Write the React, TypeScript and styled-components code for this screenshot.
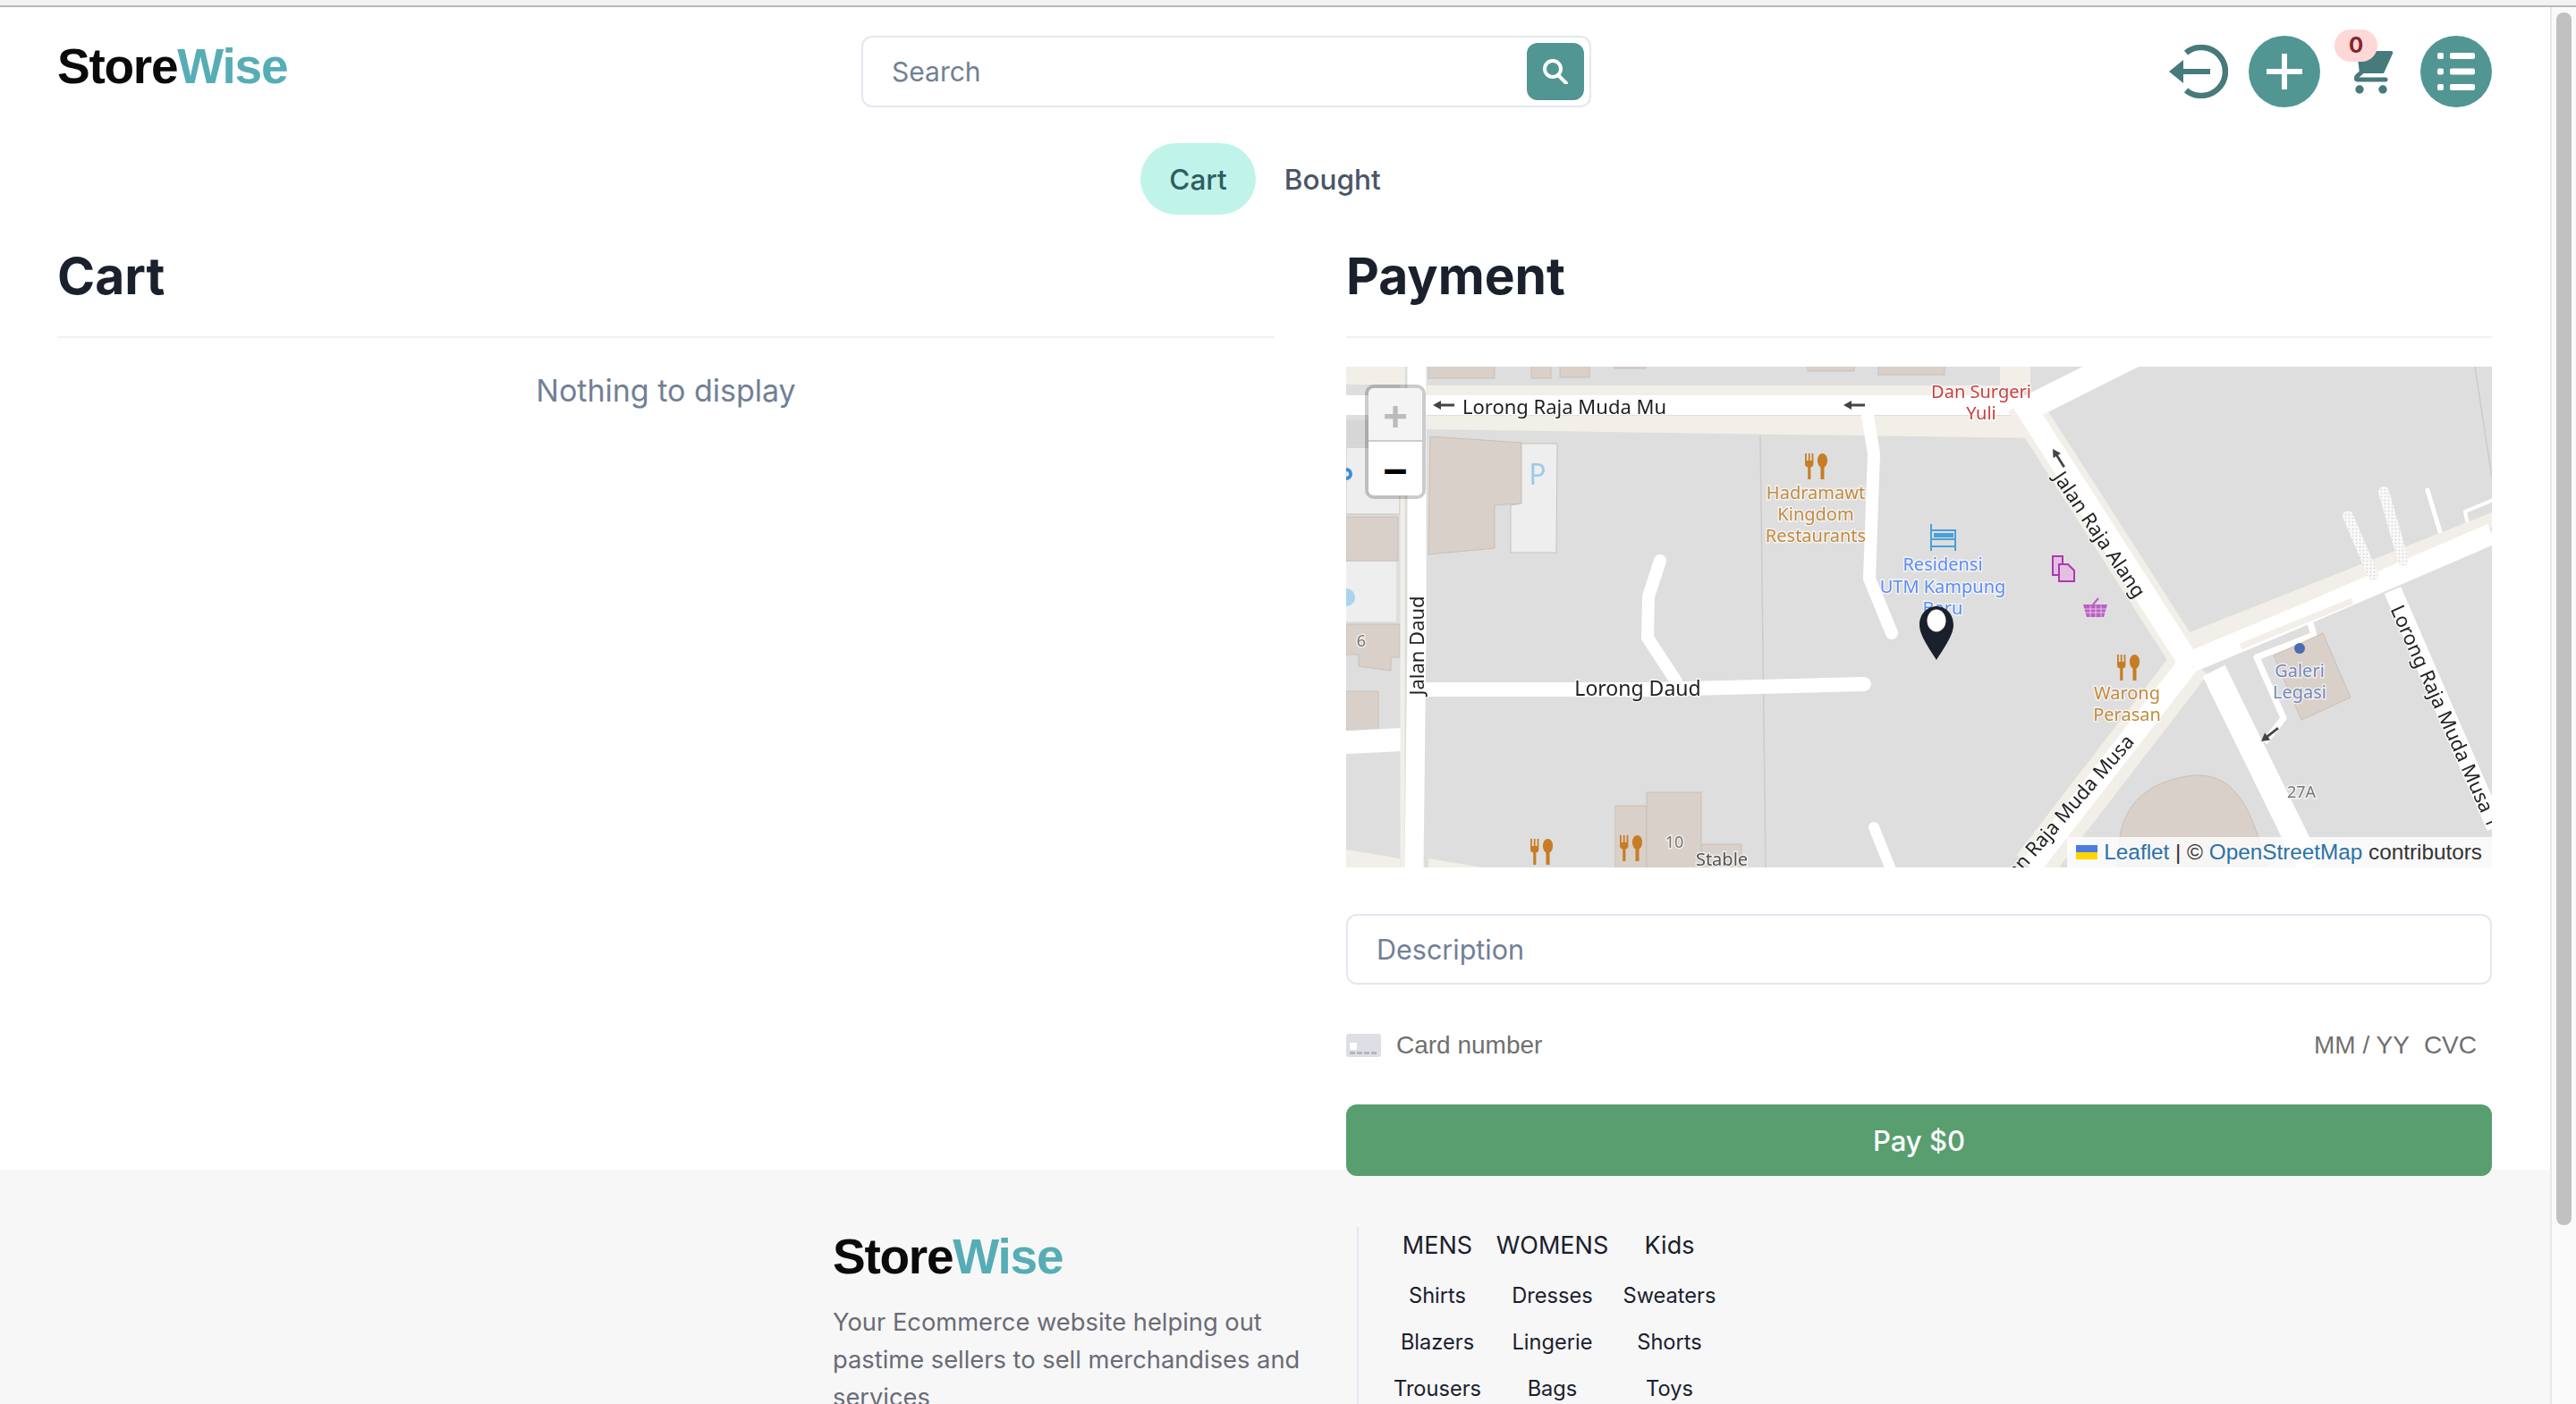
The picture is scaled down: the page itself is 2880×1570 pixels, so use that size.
import React from "react";
import styled, { createGlobalStyle } from "styled-components";

const Global = createGlobalStyle`
  html, body { margin: 0; padding: 0; background: #fff; overflow: hidden; }
  * { box-sizing: border-box; }
  body { font-family: Inter, "Liberation Sans", sans-serif; color: #1a202c; }
`;

const Shell = styled.div`
  width: 2880px;
  height: 1570px;
  overflow: hidden;
  display: flex;
  flex-direction: column;
`;
const BrowserStrip = styled.div`
  flex: 0 0 8px;
  background: #f2f2f2;
  border-bottom: 2px solid #b8b8b8;
`;
const Body = styled.div`
  flex: 1;
  display: flex;
  min-height: 0;
`;
const Page = styled.div`
  flex: 1;
  min-width: 0;
`;
const ScrollTrack = styled.div`
  flex: 0 0 29px;
  background: #fafafa;
  border-left: 2px solid #e8e8e8;
  padding: 6px 5px 0 5px;
`;
const ScrollThumb = styled.div`
  height: 1356px;
  background: #c1c1c1;
  border-radius: 8px;
`;

const Header = styled.header`
  display: grid;
  grid-template-columns: 899px 816px 1fr;
  padding: 32px 65px 0 64px;
`;
const Logo = styled.div`
  font-family: "Liberation Sans", sans-serif;
  font-weight: 700;
  font-size: 55px;
  line-height: 41px;
  letter-spacing: -1.25px;
  color: #0a0a0a;
  margin-top: 14px;
  white-space: nowrap;
  span { color: #56adb5; }
`;
const SearchBox = styled.div`
  height: 80px;
  border: 2px solid #e2e8f0;
  border-radius: 12px;
  display: flex;
  align-items: center;
  justify-content: space-between;
  padding: 0 6px 0 32px;
  font-size: 30px;
  color: #718096;
`;
const SearchButton = styled.div`
  width: 64px;
  height: 64px;
  border-radius: 12px;
  background: #519693;
  display: flex;
  align-items: center;
  justify-content: center;
`;
const IconBar = styled.div`
  display: flex;
  align-items: center;
  justify-content: flex-end;
  height: 80px;
`;
const Slot = styled.div<{ $gap?: number }>`
  display: flex;
  margin-left: ${(p) => p.$gap ?? 0}px;
  position: relative;
`;
const RoundButton = styled.div`
  width: 80px;
  height: 80px;
  border-radius: 50%;
  background: #519693;
  display: flex;
  align-items: center;
  justify-content: center;
`;
const Badge = styled.div`
  position: absolute;
  left: -22px;
  top: -23px;
  width: 48px;
  height: 36px;
  border-radius: 18px;
  background: #fed7d7;
  color: #822727;
  font-size: 24px;
  font-weight: 700;
  line-height: 36px;
  text-align: center;
`;

const Tabs = styled.nav`
  display: flex;
  justify-content: center;
  margin-top: 40px;
`;
const Tab = styled.div<{ $active?: boolean }>`
  height: 80px;
  padding: 0 32px;
  border-radius: 40px;
  display: flex;
  align-items: center;
  font-size: 31.5px;
  font-weight: 500;
  color: ${(p) => (p.$active ? "#2f5d62" : "#4a5568")};
  background: ${(p) => (p.$active ? "#c0f4ea" : "transparent")};
`;

const Columns = styled.main`
  height: 1068px;
  display: grid;
  grid-template-columns: 1361px 1281px;
  column-gap: 80px;
  padding: 33px 65px 0 64px;
`;
const Column = styled.section`
  display: flex;
  flex-direction: column;
  min-width: 0;
`;
const Title = styled.h2`
  margin: 0;
  height: 105px;
  padding-bottom: 31px;
  border-bottom: 2px solid #edf0f4;
  font-size: 57px;
  line-height: 72px;
  font-weight: 700;
  color: #1a202c;
`;
const Empty = styled.div`
  margin-top: 32px;
  line-height: 54px;
  font-size: 34px;
  text-align: center;
  color: #718096;
`;
const MapFrame = styled.div`
  margin-top: 32px;
  height: 560px;
  position: relative;
  overflow: hidden;
  background: #dedede;
`;
const MapArt = styled.svg`
  display: block;
  width: 1281px;
  height: 560px;
  filter: blur(0.6px);
`;
const MapLabel = styled.text<{ $color?: string; $size?: number; $anchor?: string }>`
  font-family: "Noto Sans", sans-serif;
  font-size: ${(p) => p.$size ?? 20}px;
  fill: ${(p) => p.$color ?? "#222"};
  stroke: rgba(255, 255, 255, 0.6);
  stroke-width: 3px;
  paint-order: stroke;
  text-anchor: ${(p) => p.$anchor ?? "middle"};
`;
const ParkingMark = styled.text`
  font-family: "Noto Sans", sans-serif;
  font-size: 32px;
  fill: #9bcbe8;
  text-anchor: middle;
`;
const ZoomControl = styled.div`
  position: absolute;
  left: 21px;
  top: 20px;
  width: 68px;
  border: 4px solid rgba(0, 0, 0, 0.2);
  border-radius: 10px;
  background-clip: padding-box;
  overflow: hidden;
`;
const ZoomButton = styled.div<{ $off?: boolean }>`
  height: 60px;
  padding-top: 4px;
  display: flex;
  align-items: center;
  justify-content: center;
  background: ${(p) => (p.$off ? "#f4f4f4" : "#fff")};
  color: ${(p) => (p.$off ? "#bbb" : "#000")};
  border-bottom: ${(p) => (p.$off ? "2px solid #ccc" : "none")};
  font-family: "DejaVu Sans Mono", monospace;
  font-weight: 700;
  font-size: 44px;
  line-height: 1;
`;
const Attribution = styled.div`
  position: absolute;
  right: 0;
  bottom: 0;
  height: 34px;
  padding: 0 11px 0 10px;
  background: rgba(255, 255, 255, 0.8);
  display: flex;
  align-items: center;
  gap: 7px;
  font-family: "Liberation Sans", sans-serif;
  font-size: 24.3px;
  color: #333;
  white-space: nowrap;
`;
const Flag = styled.svg`
  display: block;
  width: 24px;
  height: 16px;
`;
const MapLink = styled.span`
  color: #2a72a8;
`;
const TextField = styled.div`
  margin-top: 52px;
  height: 79px;
  flex: none;
  border: 2px solid #e2e8f0;
  border-radius: 12px;
  padding: 0 32px;
  display: flex;
  align-items: center;
  font-size: 30.5px;
  color: #718096;
`;
const CardRow = styled.div`
  margin-top: 52px;
  height: 32px;
  flex: none;
  display: flex;
  align-items: center;
  padding-right: 17px;
  font-family: "Liberation Sans", sans-serif;
  font-size: 28px;
  color: #707070;
`;
const CardIcon = styled.svg`
  width: 39px;
  height: 26px;
  margin-right: 17px;
`;
const CardNumber = styled.span`
  flex: 1;
`;
const CardHint = styled.span`
  margin-left: 16px;
`;
const PayButton = styled.button`
  position: relative;
  z-index: 1;
  flex: none;
  margin-top: 50px;
  height: 80px;
  border: 0;
  border-radius: 12px;
  background: #589e6f;
  color: #fff;
  font-family: Inter, sans-serif;
  font-size: 31px;
  font-weight: 500;
`;

const Footer = styled.footer`
  background: #f7f7f7;
  padding-top: 64px;
  padding-left: 931px;
  display: flex;
  height: 400px;
`;
const Brand = styled.div`
  width: 586px;
  padding-right: 50px;
`;
const FooterLogo = styled(Logo)`
  margin-top: 13px;
`;
const Blurb = styled.p`
  margin: 32px 0 0 0;
  font-size: 27.3px;
  line-height: 42px;
  color: #6a6b76;
`;
const LinkGrid = styled.div`
  border-left: 2px solid #e2e8f0;
  padding-left: 39px;
  display: grid;
  grid-template-columns: 98px 125px 103px;
  column-gap: 17px;
  grid-auto-rows: 52px;
  grid-template-rows: 51px;
  justify-items: center;
`;
const LinkHead = styled.div`
  font-size: 27px;
  line-height: 42px;
  color: #1a202c;
  white-space: nowrap;
`;
const LinkCell = styled.div`
  font-size: 23.6px;
  line-height: 52px;
  color: #1a202c;
  white-space: nowrap;
`;

const BEIGE = "#f2efe9";
const BUILD = "#d9d0c9";
const BUILDLINE = "#cbbfb6";
const FOOD = "#c77d26";

const Food = ({ x, y }: { x: number; y: number }) => (
  <g transform={`translate(${x} ${y})`} fill={FOOD}>
    <path d="M0 0h1.8v8h2V0h1.8v8h2V0h1.8v1 11q0 3-3 3.4V29H3.2V15.4Q0 15 0 12z" />
    <ellipse cx="19.5" cy="8" rx="5.6" ry="8" />
    <rect x="17.5" y="12" width="4" height="17" />
  </g>
);

const Arrow = ({ x, y, rot }: { x: number; y: number; rot: number }) => (
  <g transform={`translate(${x} ${y}) rotate(${rot})`} fill="#444">
    <path d="M0 0l9-5v3.6h15v2.8H9V5z" />
  </g>
);

const MapDrawing = () => (
  <MapArt viewBox="0 0 1281 560">
    <defs>
      <pattern id="dots" width="4" height="4" patternUnits="userSpaceOnUse">
        <rect width="4" height="4" fill="#f8f8f8" />
        <circle cx="1.5" cy="1.5" r="0.8" fill="#cfcfcf" />
      </pattern>
    </defs>
    <rect width="1281" height="560" fill="#dedede" />

    {/* left strip */}
    <rect x="0" y="0" width="64" height="20" fill={BEIGE} />
    <rect x="0" y="60" width="64" height="28" fill="#d6d6d6" />
    <rect x="0" y="90" width="60" height="75" fill="#eeeeee" stroke={BUILDLINE} />
    <rect x="0" y="168" width="58" height="49" fill={BUILD} stroke={BUILDLINE} />
    <rect x="0" y="218" width="56" height="67" fill="#eeeeee" />
    <path d="M0 288H60V325H50V340L14 335V322H0z" fill={BUILD} stroke={BUILDLINE} />
    <rect x="0" y="363" width="36" height="44" fill={BUILD} stroke={BUILDLINE} />
    <path d="M0 407l63-3v26l-63 3z" fill="#fff" />
    <path d="M0 540l60 10v10H0z" fill={BEIGE} />
    <path d="M92 550l60 10H92z" fill={BEIGE} />
    <path d="M0 113a7 7 0 0 1 0 14v-4a3 3 0 0 0 0-6z" fill="#3a8fd6" />
    <path d="M0 248a10 10 0 0 1 0 20z" fill="#a9d3ee" />

    {/* top buildings */}
    <rect x="92" y="-2" width="74" height="15" fill={BUILD} stroke={BUILDLINE} />
    <rect x="207" y="-2" width="22" height="15" fill={BUILD} stroke={BUILDLINE} />
    <rect x="239" y="-2" width="33" height="14" fill={BUILD} stroke={BUILDLINE} />
    <rect x="300" y="-2" width="35" height="4" fill={BUILD} stroke={BUILDLINE} />
    <rect x="516" y="-2" width="52" height="7" fill={BUILD} stroke={BUILDLINE} />
    <rect x="595" y="-2" width="74" height="11" fill={BUILD} stroke={BUILDLINE} />

    {/* top road and sidewalks */}
    <rect x="90" y="21" width="645" height="11" fill={BEIGE} />
    <path d="M90 55H760L775 80 90 70z" fill={BEIGE} />
    <rect x="731" y="0" width="34" height="24" fill={BEIGE} />
    <rect x="0" y="32" width="780" height="22" fill="#fff" />
    <path d="M63 0V560" stroke={BEIGE} strokeWidth="5" />
    <path d="M79 0L79 300 76 560" stroke="#fff" strokeWidth="21" fill="none" />

    {/* thin lines */}
    <path d="M463 77L469 560" stroke="#cbcbcb" strokeWidth="1.5" />
    <path d="M1262 0L1281 124" stroke="#cbcbcb" strokeWidth="1.5" />

    {/* main building and parking */}
    <path d="M94 78L196 85V153L166 155V203L92 210z" fill={BUILD} stroke={BUILDLINE} />
    <path d="M196 86H236L235 208H184V155L196 153z" fill="#eeeeee" stroke={BUILDLINE} />

    {/* driveways */}
    <g fill="none" stroke="#fff" strokeLinecap="round" strokeLinejoin="round">
      <path d="M351 217L338 257 337 303 369 352" strokeWidth="14" />
      <path d="M89 361L340 361 579 355" strokeWidth="16" />
      <path d="M583 55L590 97 585 237 610 298" strokeWidth="14" />
      <path d="M590 515L612 570" strokeWidth="12" />
      <path d="M1209 138L1227 198" strokeWidth="5" />
      <path d="M1251 162L1256 187M1251 162L1285 148" strokeWidth="4" />
    </g>

    {/* diagonals */}
    <g fill="none" strokeLinecap="butt" strokeLinejoin="round">
      <path d="M756 40L945 335" stroke={BEIGE} strokeWidth="38" />
      <path d="M943 297L1281 163V180L955 322z" fill={BEIGE} stroke="none" />
      <path d="M945 330L768 560" stroke={BEIGE} strokeWidth="46" />
      <path d="M765 45L885 -15" stroke="#fff" strokeWidth="28" />
      <path d="M756 40L945 335" stroke="#fff" strokeWidth="24" />
      <path d="M942 332L765 560" stroke="#fff" strokeWidth="24" />
      <path d="M970 340L1078 560" stroke="#fff" strokeWidth="28" />
      <path d="M945 330L1060 282 1281 187" stroke="#fff" strokeWidth="24" />
      <path d="M1170 250L1285 515" stroke="#fff" strokeWidth="20" />
      <path d="M1078 287L1082 300 1018 325 1048 393 1027 420" stroke="#fff" strokeWidth="7" />
      <path d="M1000 313L1125 262" stroke={BEIGE} strokeWidth="7" />
      <path d="M1120 167L1148 233" stroke="url(#dots)" strokeWidth="12" strokeLinecap="round" />
      <path d="M1160 140L1182 217" stroke="url(#dots)" strokeWidth="12" strokeLinecap="round" />
    </g>

    {/* Galeri, dome, bottom buildings */}
    <path d="M1037 323L1092 298 1123 370 1068 395z" fill={BUILD} stroke={BUILDLINE} />
    <path d="M865 527C870 490 895 463 948 457C985 455 1005 480 1020 527L1030 565H860z" fill={BUILD} stroke={BUILDLINE} />
    <rect x="301" y="491" width="35" height="75" fill={BUILD} stroke={BUILDLINE} />
    <rect x="336" y="476" width="61" height="90" fill={BUILD} stroke={BUILDLINE} />
    <rect x="398" y="534" width="44" height="30" fill={BUILD} stroke={BUILDLINE} />

    {/* pictograms */}
    <Food x={513} y={97} />
    <Food x={862} y={322} />
    <Food x={206} y={528} />
    <Food x={306} y={524} />
    <g stroke="#4a9fd9" strokeWidth="2" fill="none">
      <path d="M654 176V206M681 182V206M654 183H681M654 193H681M654 201H681" />
      <rect x="658" y="187" width="5" height="3" fill="#4a9fd9" />
      <rect x="665" y="187" width="13" height="3" fill="#4a9fd9" />
    </g>
    <g stroke="#ac39ac" strokeWidth="2" fill="#e2c0e2">
      <path d="M790 212H801V233H790z" />
      <path d="M797 221H807L814 228V240H797z" />
    </g>
    <g>
      <path d="M824 266H851L847 280H828z" fill="#b95fc4" />
      <path d="M835 266L841 259" stroke="#b95fc4" strokeWidth="2" />
      <path d="M825 271H850M826 275H849M832 267V280M838 267V280M844 267V280" stroke="#e5c7ea" strokeWidth="1" />
    </g>
    <circle cx="1066" cy="315" r="6" fill="#4c6db0" />

    <Arrow x={97} y={43} rot={0} />
    <Arrow x={556} y={43} rot={0} />
    <Arrow x={790} y={92} rot={58} />
    <Arrow x={1023} y={419} rot={-38} />

    {/* labels */}
    <MapLabel x={244} y={53} $size={22}>Lorong Raja Muda Mu</MapLabel>
    <MapLabel x={326} y={368} $size={23}>Lorong Daud</MapLabel>
    <MapLabel transform="translate(87 312) rotate(-90)" $size={22}>Jalan Daud</MapLabel>
    <MapLabel transform="translate(836 192) rotate(56)" $size={22}>Jalan Raja Alang</MapLabel>
    <MapLabel transform="translate(882 420) rotate(-49)" $size={22} $anchor="end">Jalan Raja Muda Musa</MapLabel>
    <MapLabel transform="translate(1222 394) rotate(66)" $size={22}>Lorong Raja Muda Musa 1</MapLabel>
    <MapLabel x={710} y={35} $color="#c9403f">Dan Surgeri</MapLabel>
    <MapLabel x={710} y={59} $color="#c9403f">Yuli</MapLabel>
    <MapLabel x={525} y={148} $color="#c48a3f">Hadramawt</MapLabel>
    <MapLabel x={525} y={172} $color="#c48a3f">Kingdom</MapLabel>
    <MapLabel x={525} y={196} $color="#c48a3f">Restaurants</MapLabel>
    <MapLabel x={667} y={228} $color="#5b8df5">Residensi</MapLabel>
    <MapLabel x={667} y={253} $color="#5b8df5">UTM Kampung</MapLabel>
    <MapLabel x={667} y={277} $color="#5b8df5">Baru</MapLabel>
    <MapLabel x={873} y={372} $color="#c48a3f">Warong</MapLabel>
    <MapLabel x={873} y={396} $color="#c48a3f">Perasan</MapLabel>
    <MapLabel x={1066} y={347} $color="#7488bd">Galeri</MapLabel>
    <MapLabel x={1066} y={371} $color="#7488bd">Legasi</MapLabel>
    <MapLabel x={1068} y={482} $color="#777" $size={18}>27A</MapLabel>
    <MapLabel x={17} y={313} $color="#777" $size={18}>6</MapLabel>
    <MapLabel x={367} y={538} $color="#777" $size={18}>10</MapLabel>
    <MapLabel x={420} y={558} $color="#555">Stable</MapLabel>
    <ParkingMark x={214} y={132}>P</ParkingMark>

    {/* marker */}
    <path d="M660 268C649 268 641 277 641 289C641 301 654 318 660 328C666 318 679 301 679 289C679 277 671 268 660 268z" fill="#1a202c" />
    <ellipse cx="660" cy="284" rx="10.5" ry="12.5" fill="#fff" />
  </MapArt>
);

export default function App() {
  return (
    <>
      <Global />
      <Shell>
        <BrowserStrip />
        <Body>
          <Page>
            <Header>
              <Logo>Store<span>Wise</span></Logo>
              <SearchBox>
                Search
                <SearchButton>
                  <svg width="30" height="28" viewBox="0 0 30 28" fill="none" stroke="#fff" strokeWidth="4">
                    <circle cx="12" cy="11" r="9" />
                    <path d="M18 18L27 27" strokeLinecap="round" />
                  </svg>
                </SearchButton>
              </SearchBox>
              <IconBar>
                <Slot>
                  <svg width="66" height="60" viewBox="0 0 66 60">
                    <path d="M19 9A27 27 0 1 1 19 51" fill="none" stroke="#467a7b" strokeWidth="6.5" />
                    <path d="M0 30L16 17V27H46V33H16V43z" fill="#467a7b" />
                  </svg>
                </Slot>
                <Slot $gap={23}>
                  <RoundButton>
                    <svg width="40" height="40" viewBox="0 0 40 40" fill="#fff">
                      <rect x="17" y="0" width="6" height="40" />
                      <rect x="0" y="17" width="40" height="6" />
                    </svg>
                  </RoundButton>
                </Slot>
                <Slot $gap={38}>
                  <svg width="44" height="49" viewBox="0 0 44 49">
                    <path d="M3 1H41Q44 1 43 4L33 26H6z" fill="#467a7b" />
                    <path d="M8 25L3.5 29Q0.5 33 5 33H35" fill="none" stroke="#467a7b" strokeWidth="5" strokeLinecap="round" />
                    <circle cx="6" cy="44" r="4.7" fill="#467a7b" />
                    <circle cx="32" cy="44" r="4.7" fill="#467a7b" />
                  </svg>
                  <Badge>0</Badge>
                </Slot>
                <Slot $gap={30}>
                  <RoundButton>
                    <svg width="42" height="42" viewBox="0 0 42 42" fill="#fff">
                      <rect x="0" y="0" width="7" height="7" rx="2" />
                      <rect x="14" y="0" width="28" height="7" rx="2" />
                      <rect x="0" y="17.5" width="7" height="7" rx="2" />
                      <rect x="14" y="17.5" width="28" height="7" rx="2" />
                      <rect x="0" y="35" width="7" height="7" rx="2" />
                      <rect x="14" y="35" width="28" height="7" rx="2" />
                    </svg>
                  </RoundButton>
                </Slot>
              </IconBar>
            </Header>

            <Tabs>
              <Tab $active>Cart</Tab>
              <Tab>Bought</Tab>
            </Tabs>

            <Columns>
              <Column>
                <Title>Cart</Title>
                <Empty>Nothing to display</Empty>
              </Column>
              <Column>
                <Title>Payment</Title>
                <MapFrame>
                  <MapDrawing />
                  <ZoomControl>
                    <ZoomButton $off>+</ZoomButton>
                    <ZoomButton>−</ZoomButton>
                  </ZoomControl>
                  <Attribution>
                    <Flag viewBox="0 0 24 16">
                      <rect width="24" height="8" fill="#4c7be1" />
                      <rect y="8" width="24" height="8" fill="#ffd500" />
                    </Flag>
                    <span><MapLink>Leaflet</MapLink> | © <MapLink>OpenStreetMap</MapLink> contributors</span>
                  </Attribution>
                </MapFrame>
                <TextField>Description</TextField>
                <CardRow>
                  <CardIcon viewBox="0 0 39 26">
                    <rect width="39" height="26" rx="3" fill="#dedfe4" />
                    <rect x="4" y="10" width="8" height="8" rx="1" fill="#fff" />
                    <path d="M4 21.5H35" stroke="#b5b6c0" strokeWidth="3" strokeDasharray="6 2" />
                  </CardIcon>
                  <CardNumber>Card number</CardNumber>
                  <CardHint>MM / YY</CardHint>
                  <CardHint>CVC</CardHint>
                </CardRow>
                <PayButton>Pay $0</PayButton>
              </Column>
            </Columns>

            <Footer>
              <Brand>
                <FooterLogo>Store<span>Wise</span></FooterLogo>
                <Blurb>Your Ecommerce website helping out pastime sellers to sell merchandises and services</Blurb>
              </Brand>
              <LinkGrid>
                <LinkHead>MENS</LinkHead>
                <LinkHead>WOMENS</LinkHead>
                <LinkHead>Kids</LinkHead>
                <LinkCell>Shirts</LinkCell>
                <LinkCell>Dresses</LinkCell>
                <LinkCell>Sweaters</LinkCell>
                <LinkCell>Blazers</LinkCell>
                <LinkCell>Lingerie</LinkCell>
                <LinkCell>Shorts</LinkCell>
                <LinkCell>Trousers</LinkCell>
                <LinkCell>Bags</LinkCell>
                <LinkCell>Toys</LinkCell>
              </LinkGrid>
            </Footer>
          </Page>
          <ScrollTrack>
            <ScrollThumb />
          </ScrollTrack>
        </Body>
      </Shell>
    </>
  );
}
